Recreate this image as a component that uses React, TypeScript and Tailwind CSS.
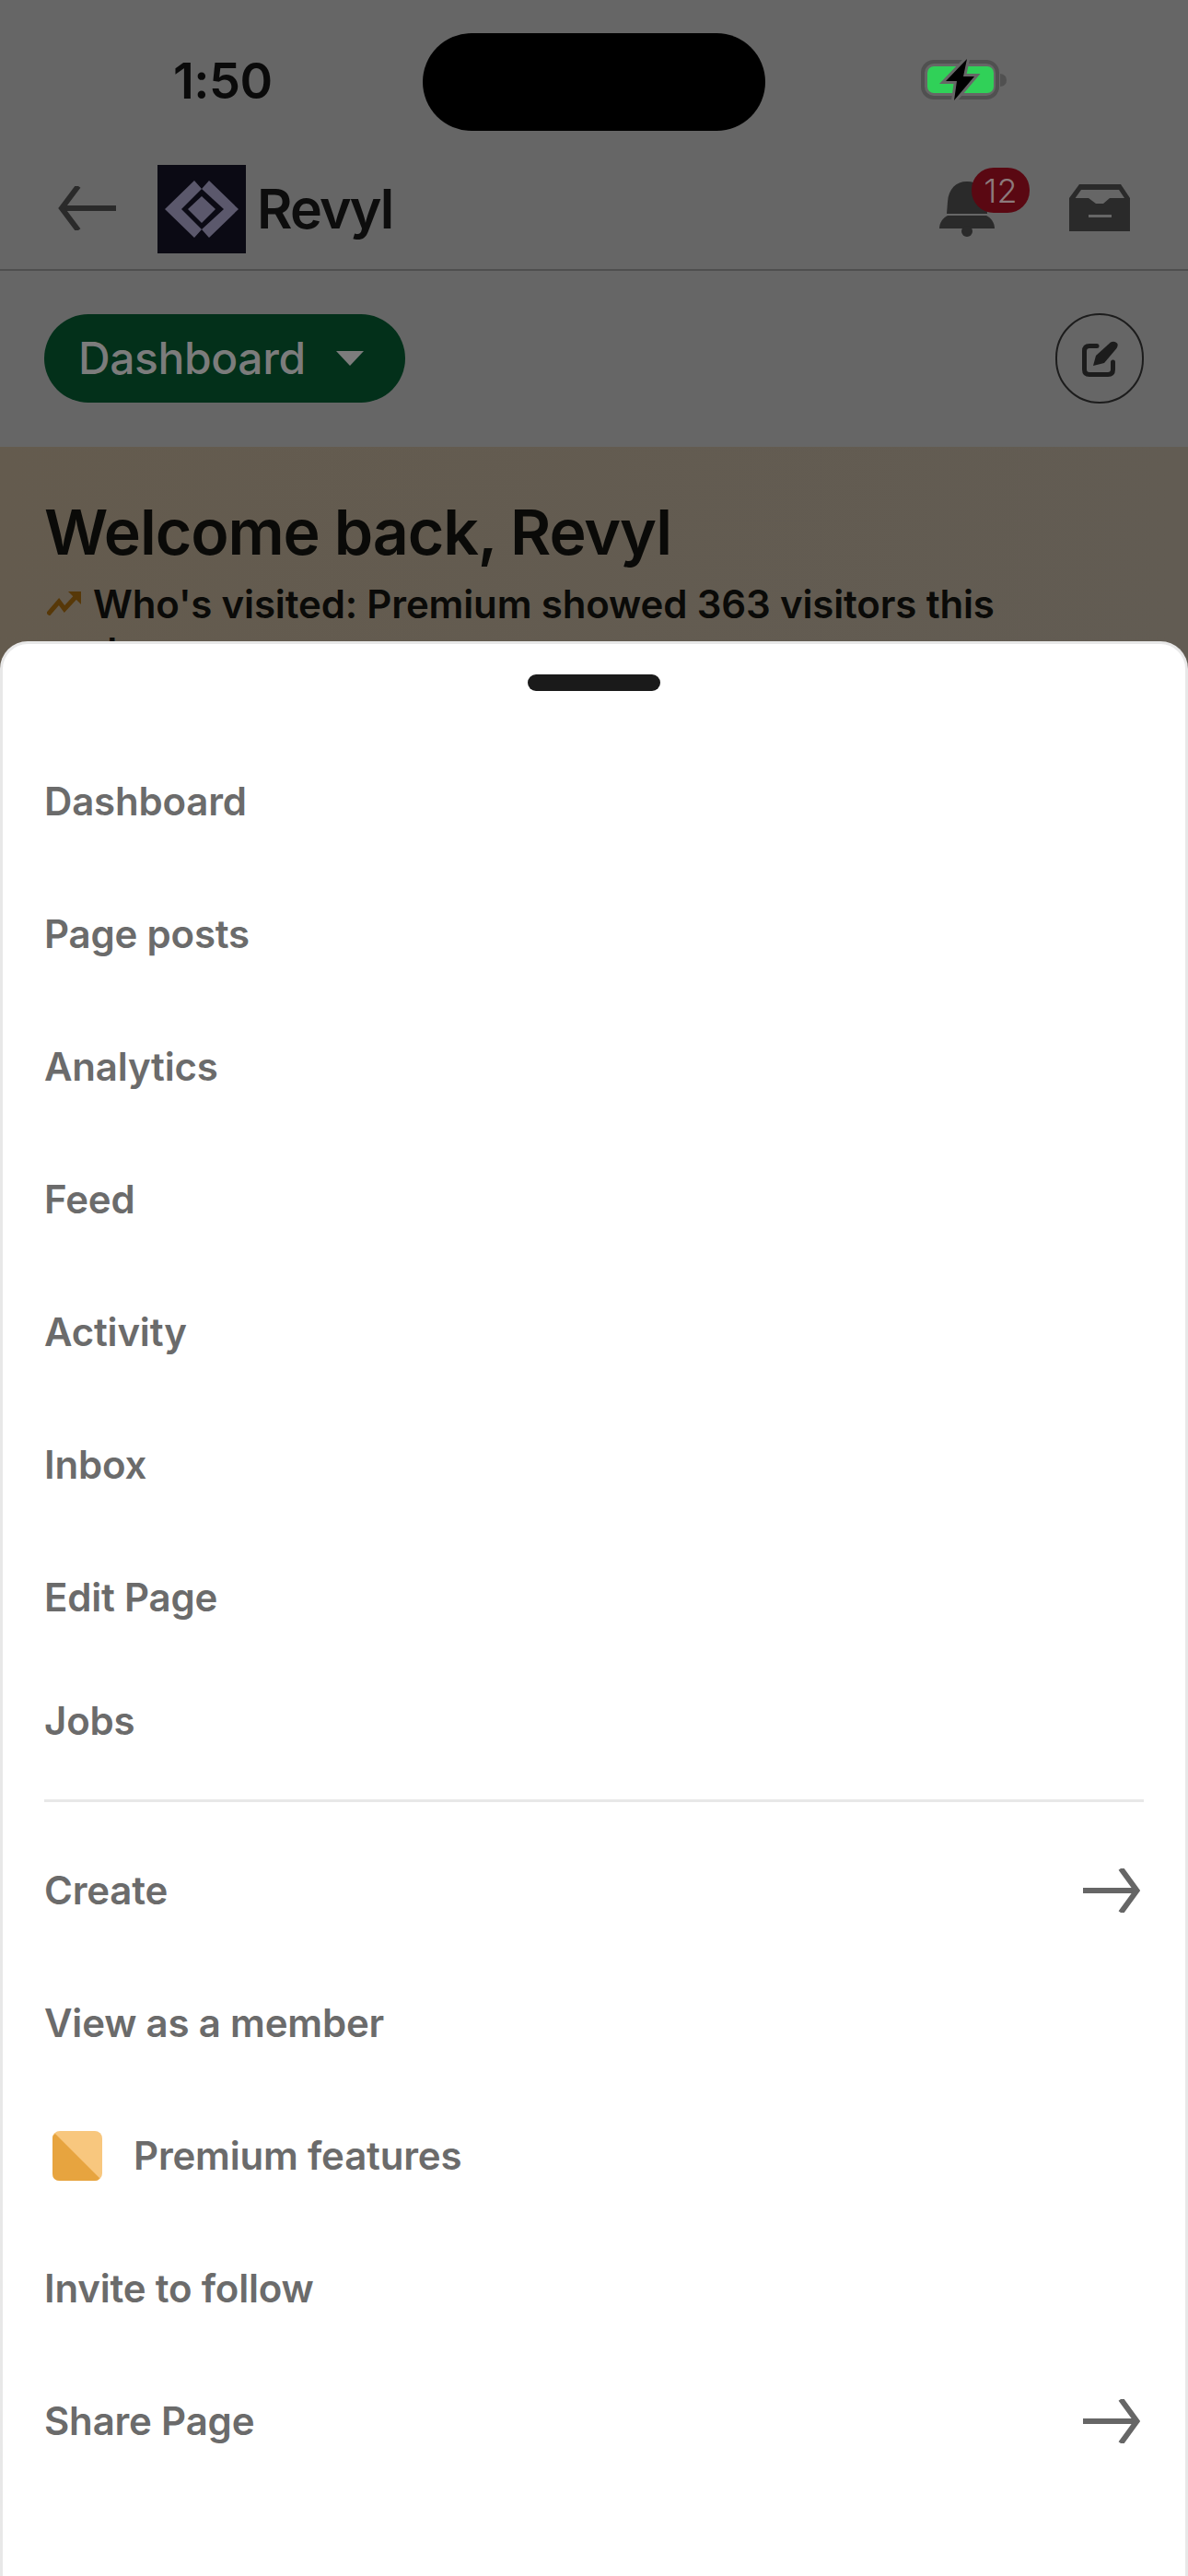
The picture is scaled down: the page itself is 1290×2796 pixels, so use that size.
const inter = 'font-["Inter","Liberation_Sans",sans-serif]';

function Arrow() {
  return (
    <svg width="62" height="48" viewBox="0 0 62 48" fill="none" className="shrink-0 mr-[4px]">
      <path d="M0 24H58" stroke="#666666" strokeWidth="6" />
      <path d="M41 0L58.5 24L41 48" stroke="#666666" strokeWidth="6" />
    </svg>
  );
}

function MenuRow({ label, arrow, icon, className }: { label: string; arrow?: boolean; icon?: boolean; className?: string }) {
  return (
    <div className={`flex items-center justify-between h-[144px] ${className ?? ''}`}>
      <div className="flex items-center">
        {icon && (
          <svg width="54" height="54" viewBox="0 0 54 54" className="ml-[9px] mr-[34px]">
            <rect width="54" height="54" rx="8" fill="#f8c77e" />
            <path d="M3 3L51 51Q50 54 46 54H8Q0 54 0 46V8Q0 4 3 3Z" fill="#e7a43f" />
          </svg>
        )}
        <span className="text-[42px] leading-[56px] font-semibold tracking-[-0.2px] text-[#6b6b6b]">{label}</span>
      </div>
      {arrow && <Arrow />}
    </div>
  );
}

export default function App() {
  return (
    <div className={`relative w-[1290px] h-[2796px] overflow-hidden bg-[#666666] ${inter}`}>
      {/* dimmed page behind the sheet */}
      <div className="h-[180px] flex items-start">
        <div className="w-[459px] pl-[188px] pt-[58px] text-[54px] leading-[60px] font-semibold tracking-[-0.5px] text-[#0a0a0a]">1:50</div>
        <div className="mt-[36px] w-[372px] h-[106px] rounded-[53px] bg-black" />
        <svg width="94" height="46" viewBox="0 0 94 46" className="ml-[169px] mt-[64px]">
          <rect x="2" y="3" width="81" height="39" rx="12" fill="none" stroke="#505050" strokeWidth="4" />
          <rect x="7" y="8" width="72" height="29" rx="7" fill="#30d158" />
          <path d="M86 16Q93 17 93 23Q93 29 86 30Z" fill="#505050" />
          <path d="M50 0L27 24H39L36 45L58 19H46Z" fill="#666666" stroke="#666666" strokeWidth="6" />
          <path d="M50 0L27 24H39L36 45L58 19H46Z" fill="#000" />
        </svg>
      </div>

      <div className="h-[114px] flex items-start border-b-2 border-[#4f4f4f]">
        <svg width="63" height="48" viewBox="0 0 63 48" className="ml-[63px] mt-[22px] shrink-0" fill="none">
          <path d="M63 24H4" stroke="#2a2a2a" strokeWidth="6" />
          <path d="M22 0L4 24L22 48" stroke="#2a2a2a" strokeWidth="6" />
        </svg>
        <svg width="96" height="96" viewBox="0 0 96 96" className="ml-[45px] mt-[-1px] shrink-0">
          <rect width="96" height="96" fill="#0b0a14" />
          <path d="M40 17L8 48L40 79L48 70L26 48L48 26Z" fill="#5b586c" />
          <path d="M48 26L56 17L88 48L56 79L48 70L72 48Z" fill="#5b586c" />
          <path d="M48 34L63 48L48 63L33 48Z" fill="#5b586c" />
        </svg>
        <span className="ml-[12px] mt-[12px] text-[59px] leading-[70px] font-semibold text-[#0d0d0d] tracking-[-1.8px]">Revyl</span>
        <div className="relative ml-auto mt-[17px] w-[60px] h-[60px]">
          <svg width="60" height="60" viewBox="0 0 60 60">
            <path d="M30 0C42 0 50 8 51 22L52 35H8L9 22C10 8 18 0 30 0Z" fill="#2a2a2a" />
            <path d="M9 37H51C56 39 60 45 60 51H0C0 45 4 39 9 37Z" fill="#2a2a2a" />
            <circle cx="30" cy="54" r="6" fill="#2a2a2a" />
          </svg>
          <div className="absolute left-[35px] top-[-15px] w-[63px] h-[49px] rounded-[24px] bg-[#5a0812] flex items-center justify-center text-[36px] leading-none font-light text-[#8c7a7c]">12</div>
        </div>
        <svg width="66" height="51" viewBox="0 0 66 51" className="ml-[81px] mr-[63px] mt-[20px]">
          <path d="M11 0H56L66 15V51H0V15Z" fill="#2a2a2a" />
          <path d="M6.6 15L13 6H54L60 15H44L37 21H29L21 15Z" fill="#666666" />
          <rect x="21" y="33" width="25" height="3" fill="#666666" />
        </svg>
      </div>

      <div className="h-[191px] flex items-center justify-between pl-[48px] pr-[48px] pb-[1px]">
        <div className="w-[392px] h-[96px] rounded-[48px] bg-[#03301a] flex items-center pl-[37px]">
          <span className="text-[48px] leading-[60px] font-medium tracking-[-0.4px] text-[#7c7c7c]">Dashboard</span>
          <svg width="30" height="16" viewBox="0 0 30 16" className="ml-[33px]">
            <path d="M0 0H30L15 16Z" fill="#7c7c7c" />
          </svg>
        </div>
        <div className="w-[96px] h-[98px] rounded-full border-[2px] border-[#1c1c1c] flex items-center justify-center">
          <svg width="39" height="39" viewBox="0 0 39 39" fill="none">
            <path d="M16 5.5H8Q2.5 5.5 2.5 11V31Q2.5 36.5 8 36.5H28Q33.5 36.5 33.5 31V23" stroke="#1c1c1c" strokeWidth="5" strokeLinecap="round" />
            <path d="M12 27L15 16L31 1.5Q35 -0.5 38 2.5Q39.5 5 37.5 8L24 24Z" fill="#1c1c1c" />
          </svg>
        </div>
      </div>

      <div className="h-[520px] bg-gradient-to-r from-[#645b4e] to-[#625c53] pl-[48px] pt-[52px]">
        <h1 className="text-[68px] leading-[80px] font-semibold text-[#0a0a08] tracking-[-1.1px]">Welcome back, Revyl</h1>
        <div className="flex items-start mt-[13px]">
          <svg width="37" height="26" viewBox="0 0 37 26" className="ml-[3px] mr-[13px] mt-[12px] shrink-0" fill="none">
            <path d="M1 25L13 11L19 19L32 5" stroke="#573808" strokeWidth="5" />
            <path d="M23 0H37V14Z" fill="#573808" />
          </svg>
          <p className="text-[42px] leading-[52px] font-semibold tracking-[-0.15px] text-[#0a0a08]">
            Who's visited: Premium showed 363 visitors this<br />
            day
          </p>
        </div>
      </div>

      {/* bottom sheet */}
      <div className="absolute left-0 right-0 top-[696px] bottom-0 bg-white rounded-t-[30px] border-x-[3px] border-t-[3px] border-[#e8e8e8] px-[45px]">
        <div className="flex justify-center pt-[33px]">
          <div className="w-[144px] h-[18px] rounded-full bg-[#1a1a1a]" />
        </div>
        <div className="mt-[48px]">
          <MenuRow label="Dashboard" />
          <MenuRow label="Page posts" />
          <MenuRow label="Analytics" />
          <MenuRow label="Feed" />
          <MenuRow label="Activity" />
          <MenuRow label="Inbox" />
          <MenuRow label="Edit Page" />
          <div className="flex items-center h-[124px] mb-[23px]">
            <span className="text-[42px] leading-[56px] font-semibold tracking-[-0.2px] text-[#6b6b6b]">Jobs</span>
          </div>
          <div className="h-[3px] bg-[#e8e8e8]" />
        </div>
        <MenuRow label="Create" arrow className="mt-[24px]" />
        <MenuRow label="View as a member" />
        <MenuRow label="Premium features" icon />
        <MenuRow label="Invite to follow" />
        <MenuRow label="Share Page" arrow />
      </div>
    </div>
  );
}
